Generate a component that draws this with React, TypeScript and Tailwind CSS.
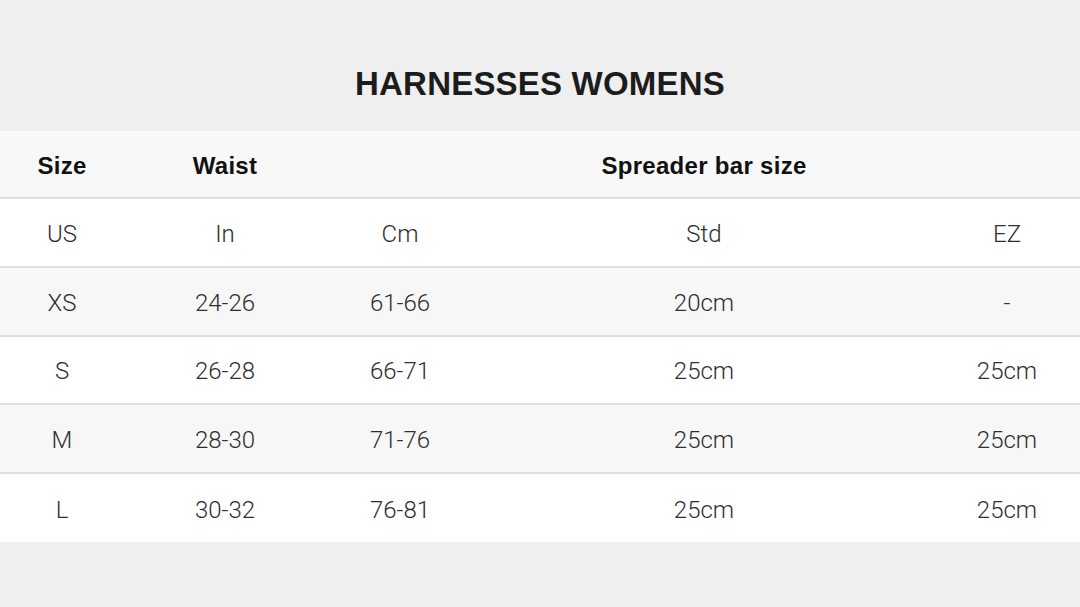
import React from 'react';

const rows = [
  ['XS', '24-26', '61-66', '20cm', '-'],
  ['S', '26-28', '66-71', '25cm', '25cm'],
  ['M', '28-30', '71-76', '25cm', '25cm'],
  ['L', '30-32', '76-81', '25cm', '25cm'],
];

export default function App() {
  return (
    <div className="min-h-[607px] bg-[#efefef] font-['Liberation_Sans',Arial,sans-serif]">
      <h1 className="pt-[65px] pb-[28px] text-center text-[33px] font-bold leading-[38px] tracking-[0.2px] text-[#1c1c1c]">
        HARNESSES WOMENS
      </h1>
      <table className="w-full table-fixed border-collapse text-center">
        <colgroup>
          <col className="w-[124px]" />
          <col className="w-[202px]" />
          <col className="w-[148px]" />
          <col className="w-[460px]" />
          <col />
        </colgroup>
        <thead>
          <tr className="h-[67px] bg-[#f8f8f8] pt-[3px] text-[24px] font-bold tracking-[0.3px] text-[#111]">
            <th className="pt-[3px]">Size</th>
            <th className="pt-[3px]">Waist</th>
            <th></th>
            <th className="pt-[3px]">Spreader bar size</th>
            <th></th>
          </tr>
        </thead>
        <tbody className="font-['Roboto',sans-serif] text-[24px] font-light text-[#2e2e2e]">
          <tr className="h-[68.8px] border-t-2 border-[#dedede] bg-white">
            <td className="pt-[3px]">US</td>
            <td className="pt-[3px]">In</td>
            <td className="pt-[3px]">Cm</td>
            <td className="pt-[3px]">Std</td>
            <td className="pt-[3px]">EZ</td>
          </tr>
          {rows.map((r, i) => (
            <tr
              key={r[0]}
              className={`h-[68.8px] border-t-2 border-[#dedede] ${i % 2 === 0 ? 'bg-[#f7f7f7]' : 'bg-white'}`}
            >
              {r.map((c, j) => (
                <td key={j} className="pt-[3px]">
                  {c}
                </td>
              ))}
            </tr>
          ))}
        </tbody>
      </table>
    </div>
  );
}
